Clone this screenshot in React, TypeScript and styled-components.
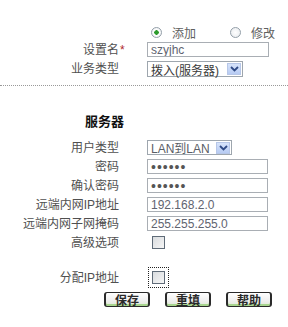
import React from "react";
import styled, { createGlobalStyle } from "styled-components";

const Global = createGlobalStyle`
  html, body { margin: 0; padding: 0; background: #ffffff; }
  body {
    font-family: "Liberation Sans", "Noto Sans CJK SC", sans-serif;
    font-size: 12px;
    color: #4a4a4a;
  }
`;

const Page = styled.div`
  width: 288px;
  height: 327px;
  padding-top: 23px;
  box-sizing: border-box;
  overflow: hidden;
`;

const Row = styled.div<{ $h: number; $mt?: number }>`
  display: grid;
  grid-template-columns: 119px 28px 1fr;
  align-items: center;
  height: ${(p) => p.$h}px;
  margin-top: ${(p) => p.$mt ?? 0}px;
`;

const Label = styled.div`
  grid-column: 1;
  text-align: right;
  white-space: nowrap;
  line-height: 14px;
  color: #505050;
`;

const Heading = styled.div`
  grid-column: 1;
  text-align: right;
  font-weight: 700;
  font-size: 13px;
  color: #111;
  margin-right: -5px;
  line-height: 14px;
`;

const Mark = styled.div`
  grid-column: 2;
  color: #b0282a;
  font-size: 12px;
  padding-left: 1px;
  line-height: 10px;
`;

const Control = styled.div`
  grid-column: 3;
  display: flex;
  align-items: center;
`;

const RadioGroup = styled.div`
  grid-column: 3;
  display: flex;
  align-items: center;
  padding-left: 4px;
`;

const RadioLabel = styled.label<{ $gap?: number }>`
  display: flex;
  align-items: center;
  color: #606060;
  margin-right: ${(p) => p.$gap ?? 0}px;
`;

const Radio = styled.input.attrs({ type: "radio" })`
  appearance: none;
  margin: 0 10px 0 0;
  width: 11px;
  height: 11px;
  border-radius: 50%;
  border: 1px solid #949fa9;
  background: radial-gradient(circle, #ffffff 0%, #e6e9ec 100%);
  box-sizing: border-box;
  &:checked {
    background: radial-gradient(circle, #2d9b2d 0 2px, #ffffff 2.5px, #e6e9ec 100%);
  }
`;

const TextInput = styled.input<{ $w: number }>`
  width: ${(p) => p.$w}px;
  height: 15px;
  box-sizing: border-box;
  border: 1px solid #a9aeb4;
  padding: 0 0 0 3px;
  margin: 0;
  font-family: "Liberation Sans", sans-serif;
  font-size: 12px;
  color: #5f6470;
  background: #fff;
  outline: none;
  &[type="password"] {
    color: #555;
    font-size: 14px;
    letter-spacing: 1px;
  }
`;

const SelectBox = styled.div<{ $w: number; $h: number; $dark?: boolean }>`
  width: ${(p) => p.$w}px;
  height: ${(p) => p.$h}px;
  box-sizing: border-box;
  border: 1px solid #9ea6ae;
  display: flex;
  align-items: center;
  justify-content: space-between;
  padding: 0 1px 0 3px;
  background: #fff;
  color: ${(p) => (p.$dark ? "#3a3a3a" : "#5a5e66")};
  white-space: nowrap;
  font-family: "Liberation Sans", "Noto Sans CJK SC", sans-serif;
`;

const Arrow = styled.span`
  width: 14px;
  height: 12px;
  background: linear-gradient(#d6e3fb, #b7cbf3);
  border: 1px solid #b7c7e8;
  box-sizing: border-box;
  display: flex;
  align-items: center;
  justify-content: center;
`;

const Divider = styled.div`
  margin-top: 5px;
  border-top: 1px dotted #999;
  height: 0;
`;

const Check = styled.input.attrs({ type: "checkbox" })<{ $focus?: boolean }>`
  appearance: none;
  margin: 0 0 0 5px;
  width: 13px;
  height: 13px;
  box-sizing: border-box;
  border: 1px solid #5f6b78;
  background: linear-gradient(135deg, #d9dcdf, #f6f6f6);
  outline: ${(p) => (p.$focus ? "1px dotted #222" : "none")};
  outline-offset: 3px;
`;

const Buttons = styled.div`
  display: flex;
  gap: 15px;
  padding-left: 104px;
  margin-top: 5px;
`;

const Button = styled.button`
  width: 46px;
  height: 15px;
  box-sizing: border-box;
  padding: 0;
  margin: 0;
  border: 1px solid #2a2a2a;
  border-left-width: 2px;
  border-right-width: 2px;
  border-radius: 3px;
  background: linear-gradient(#ffffff, #efefef 60%, #dde8d2);
  box-shadow: inset 0 -2px 0 #a8d58f;
  font-family: "Noto Sans CJK SC", sans-serif;
  font-weight: 700;
  font-size: 12px;
  line-height: 12px;
  color: #2a2a2a;
  display: flex;
  align-items: center;
  justify-content: center;
`;

const Chevron = () => (
  <svg width="9" height="6" viewBox="0 0 9 6">
    <path d="M1 1 L4.5 4.5 L8 1" fill="none" stroke="#2f4a86" strokeWidth="1.8" />
  </svg>
);

export default function App() {
  return (
    <>
      <Global />
      <Page>
        <Row $h={18}>
          <RadioGroup>
            <RadioLabel $gap={34}>
              <Radio name="mode" defaultChecked />
              添加
            </RadioLabel>
            <RadioLabel>
              <Radio name="mode" />
              修改
            </RadioLabel>
          </RadioGroup>
        </Row>
        <Row $h={17}>
          <Label>设置名</Label>
          <Mark>*</Mark>
          <Control>
            <TextInput $w={122} defaultValue="szyjhc" />
          </Control>
        </Row>
        <Row $h={22}>
          <Label>业务类型</Label>
          <Control>
            <SelectBox $w={96} $h={16} $dark>
              拨入(服务器)
              <Arrow>
                <Chevron />
              </Arrow>
            </SelectBox>
          </Control>
        </Row>
        <Divider />
        <Row $h={16} $mt={28}>
          <Heading>服务器</Heading>
        </Row>
        <Row $h={19} $mt={8}>
          <Label>用户类型</Label>
          <Control>
            <SelectBox $w={85} $h={15}>
              LAN到LAN
              <Arrow>
                <Chevron />
              </Arrow>
            </SelectBox>
          </Control>
        </Row>
        <Row $h={19}>
          <Label>密码</Label>
          <Control>
            <TextInput $w={121} type="password" defaultValue="aaaaaa" />
          </Control>
        </Row>
        <Row $h={19}>
          <Label>确认密码</Label>
          <Control>
            <TextInput $w={121} type="password" defaultValue="aaaaaa" />
          </Control>
        </Row>
        <Row $h={19}>
          <Label>远端内网IP地址</Label>
          <Control>
            <TextInput $w={121} defaultValue="192.168.2.0" />
          </Control>
        </Row>
        <Row $h={19}>
          <Label>远端内网子网掩码</Label>
          <Control>
            <TextInput $w={121} defaultValue="255.255.255.0" />
          </Control>
        </Row>
        <Row $h={19}>
          <Label>高级选项</Label>
          <Control>
            <Check />
          </Control>
        </Row>
        <Row $h={19} $mt={16}>
          <Label>分配IP地址</Label>
          <Control>
            <Check $focus />
          </Control>
        </Row>
        <Buttons>
          <Button>保存</Button>
          <Button>重填</Button>
          <Button>帮助</Button>
        </Buttons>
      </Page>
    </>
  );
}
